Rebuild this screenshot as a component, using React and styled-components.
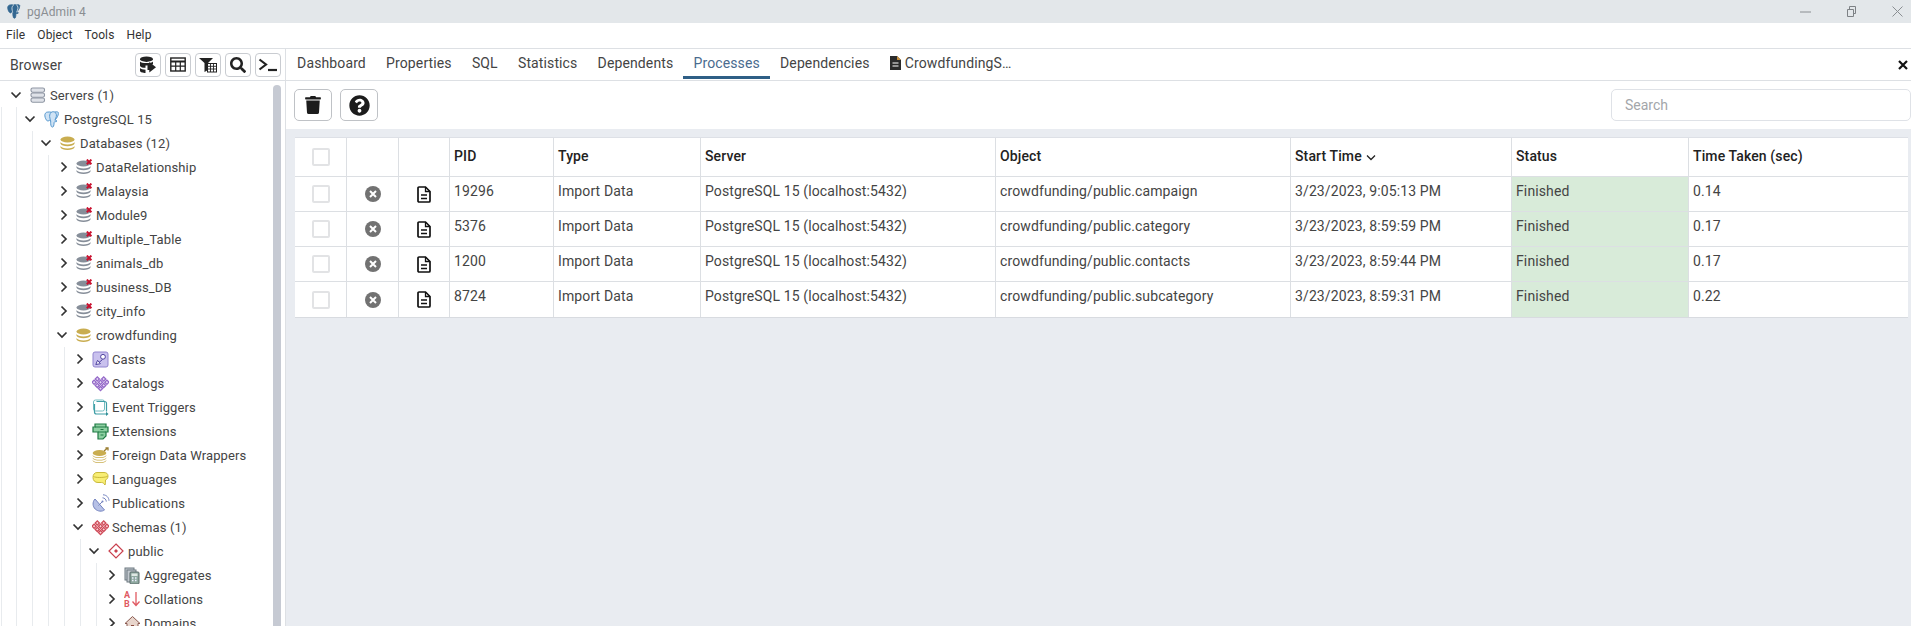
import React from 'react'
import styled, { createGlobalStyle } from 'styled-components'
import { FaSearch, FaTrash, FaQuestionCircle } from 'react-icons/fa'

const GlobalStyle = createGlobalStyle`
    html, body {
        margin: 0;
        height: 100%;
        overflow: hidden;
        background: #fff;
    }
    * {
        box-sizing: border-box;
    }
`
const Page = styled.div`
    width: 1911px;
    height: 626px;
    display: flex;
    flex-direction: column;
    overflow: hidden;
    font-family: Roboto, "Liberation Sans", sans-serif;
    font-size: 14px;
    letter-spacing: 0.12px;
    color: #333;
`
const TitleBar = styled.div`
    height: 23px;
    flex: none;
    display: flex;
    align-items: center;
    gap: 5px;
    padding: 0 8px 0 7px;
    background: #e3e7ea;
    color: #8a8e92;
    font-size: 12px;
`
const WindowControls = styled.div`
    margin-left: auto;
    display: flex;
    gap: 35px;
    svg {
        display: block;
    }
`
const MenuBar = styled.div`
    height: 26px;
    flex: none;
    display: flex;
    align-items: center;
    padding-bottom: 1px;
    border-bottom: 1px solid #dde0e4;
    font-size: 12px;
    color: #333;
`
const MenuItem = styled.span`
    padding: 0 6px;
`
const Main = styled.div`
    flex: 1;
    min-height: 0;
    display: flex;
`
const LeftPanel = styled.div`
    width: 286px;
    flex: none;
    display: flex;
    flex-direction: column;
    border-right: 1px solid #dde0e4;
`
const PanelHeader = styled.div`
    height: 32px;
    flex: none;
    display: flex;
    align-items: center;
    padding: 0 4px 0 10px;
    border-bottom: 1px solid #dde0e4;
`
const PanelTitle = styled.span`
    flex: 1;
    font-size: 14px;
    color: #444;
`
const PanelButtons = styled.div`
    display: flex;
    gap: 4px;
`
const PanelButton = styled.div`
    width: 26px;
    height: 24px;
    display: flex;
    align-items: center;
    justify-content: center;
    border: 1px solid #c9ccd1;
    border-radius: 4px;
    color: #222;
`
const TreeArea = styled.div`
    flex: 1;
    min-height: 0;
    display: flex;
    overflow: hidden;
`
const Tree = styled.div`
    flex: 1;
    padding: 2px 0 0 3px;
`
const ScrollThumb = styled.div`
    width: 8px;
    flex: none;
    margin: 4px 4px 0 0;
    border-radius: 4px 4px 0 0;
    background: #c6cad3;
`
const RootGuide = styled.div`
    margin-left: -2px;
    padding-left: 14px;
    border-left: 1px solid #e8ebee;
`
const Children = styled.div`
    border-left: 1px solid #e8ebee;
    margin-left: ${(p) => (p.$first ? '0' : '15px')};
`
const Row = styled.div`
    height: 24px;
    display: flex;
    align-items: center;
    white-space: nowrap;
    font-size: 13px;
    color: #444;
`
const Chevron = styled.span`
    width: 27px;
    flex: none;
    display: flex;
    justify-content: flex-end;
    padding-right: 8px;
`
const NodeIcon = styled.span`
    width: 20px;
    flex: none;
    display: flex;
    svg {
        display: block;
    }
`
const RightPanel = styled.div`
    flex: 1;
    min-width: 0;
    display: flex;
    flex-direction: column;
`
const Tabs = styled.div`
    height: 32px;
    flex: none;
    display: flex;
    align-items: stretch;
    padding-left: 1px;
    border-bottom: 1px solid #dde0e4;
`
const Tab = styled.div`
    display: flex;
    align-items: center;
    gap: 4px;
    padding: 0 10.1px;
    margin-bottom: 1px;
    border-bottom: 3px solid ${(p) => (p.$active ? '#2f5f86' : 'transparent')};
    color: ${(p) => (p.$active ? '#4a6b8e' : '#444')};
`
const CloseTab = styled.div`
    margin-left: auto;
    padding-right: 3px;
    display: flex;
    align-items: center;
`
const Toolbar = styled.div`
    height: 48px;
    flex: none;
    display: flex;
    align-items: center;
    gap: 8px;
    padding-left: 8px;
`
const ToolButton = styled.div`
    width: 38px;
    height: 32px;
    display: flex;
    align-items: center;
    justify-content: center;
    border: 1px solid #bfc2c6;
    border-radius: 5px;
    color: #1c1c1c;
`
const SearchBox = styled.input`
    margin-left: auto;
    width: 300px;
    height: 32px;
    padding: 0 13px;
    border: 1px solid #dfe2e7;
    border-radius: 5px;
    outline: none;
    font: 14px Roboto, sans-serif;
    &::placeholder {
        color: #a3a6aa;
    }
`
const Content = styled.div`
    flex: 1;
    min-height: 0;
    padding: 8px 3px 0 9px;
    background: #e9ecf1;
`
const Table = styled.div`
    width: 1613px;
    background: #fff;
    border-top: 1px solid #dde0e6;
    border-bottom: 1px solid #d8dbe0;
`
const TableRow = styled.div`
    height: ${(p) => (p.$head ? '39px' : '35px')};
    display: grid;
    grid-template-columns: 51px 52px 51px 104px 147px 295px 295px 221px 177px 220px;
    border-bottom: ${(p) => (p.$last ? 'none' : '1px solid #dcdfe3')};
`
const Cell = styled.div`
    display: flex;
    align-items: ${(p) => (p.$center ? 'center' : 'flex-start')};
    justify-content: ${(p) => (p.$center ? 'center' : 'flex-start')};
    gap: 4px;
    padding: ${(p) => (p.$center ? '0' : p.$head ? '10px 4px 0 4px' : '6px 4px 0 4px')};
    border-left: ${(p) => (p.$noBorder ? 'none' : '1px solid #dcdfe3')};
    font-weight: ${(p) => (p.$head ? 500 : 400)};
    color: ${(p) => (p.$head ? '#222' : '#444')};
    background: ${(p) => (p.$done ? '#d8ebd9' : 'transparent')};
    white-space: nowrap;
`
const CheckBox = styled.span`
    width: 18px;
    height: 18px;
    border: 2px solid #e2e3e5;
    border-radius: 2px;
`

const ChevronRight = () => (
  <svg width="8" height="12" viewBox="0 0 8 12"><path d="M1.500 1.500 6 6l-4.500 4.500" fill="none" stroke="#333" strokeWidth="1.700" /></svg>
)
const ChevronDown = () => (
  <svg width="12" height="8" viewBox="0 0 12 8"><path d="M1.500 1.500 6 6l4.500-4.500" fill="none" stroke="#333" strokeWidth="1.700" /></svg>
)

const Elephant = ({ size = 16, fill = '#336791', stroke = '#fff', line = '#336791' }) => (
  <svg width={size} height={size} viewBox="0 0 16 16">
    <path d="M3.500 1C1.500 1 .6 2.800.8 4.500c.2 2 1.200 4 2.300 4.800.7.500 1.400 0 1.900-.8.400.6.900.8 1.300.8-.1 1.500-.1 3.800.6 5.200.4.800 1.500.8 2 .1.500-.8.500-2.500.6-3.600.1-.8.600-1 1.100-.9.800.1 1.500-.2 1.600-.7-.7-.1-1.300-.5-1.400-1.300 1.200-1.500 2.800-3.800 2.700-5.800C14.300 1 11.800.4 10.200 1 8.900.5 7.700.6 6.800 1.200 5.800.8 4.600.9 3.500 1z" fill={fill} stroke={line} strokeWidth="0.900" />
    <path d="M6.800 1.300C5.200 2.500 5 4.800 5.600 6.800c.3 1 .4 1.600.4 2.500M10.200 1.100c1.700 1 1.900 3.400.9 5.600-.4.800-.7 1.400-.7 2.300" fill="none" stroke={stroke} strokeWidth="0.900" />
  </svg>
)

const DbIcon = ({ color = '#868e99', cross }) => (
  <svg width="17" height="16" viewBox="0 0 17 16">
    <ellipse cx="7.500" cy="4.500" rx="7" ry="3" fill={color} />
    <path d="M.5 7c.6 1.600 3.500 2.500 7 2.500s6.400-.9 7-2.500v1.800c-.6 1.500-3.500 2.400-7 2.400S1.100 10.300.5 8.800z" fill={color} />
    <path d="M.5 11c.6 1.600 3.500 2.500 7 2.500s6.400-.9 7-2.500v1.500c-.6 1.500-3.500 2.500-7 2.500S1.100 14 .5 12.500z" fill={color} />
    {cross && <path d="M10.800.6l4.600 4.600m0-4.600L10.800 5.200" stroke="#c8102e" strokeWidth="2" />}
  </svg>
)

const ServersIcon = () => (
  <svg width="16" height="16" viewBox="0 0 16 16">
    {[1, 6, 11].map((y) => (
      <rect key={y} x="1" y={y} width="13.500" height="4.200" rx="1.600" fill="#dfe2e8" stroke="#8f96a3" strokeWidth="1.100" />
    ))}
  </svg>
)

const CastsIcon = () => (
  <svg width="17" height="17" viewBox="0 0 17 17">
    <rect x="1" y="1" width="15" height="15" rx="2" fill="#c9c1ee" stroke="#9184cf" />
    <circle cx="11" cy="5.800" r="2.400" fill="#fff" stroke="#4e429f" />
    <path d="M3.800 13.500l1.800-4.200 2.800 3.400z" fill="#fff" stroke="#4e429f" />
    <path d="M10.500 8.500l-3.500 3" stroke="#4e429f" />
  </svg>
)

const heartCells = [[5.300, 4], [11.700, 4], [8.500, 7.200], [2.100, 7.200], [14.900, 7.200], [5.300, 10.400], [11.700, 10.400], [8.500, 13.600]]

const Diamonds = ({ color, light }) => (
  <svg width="17" height="17" viewBox="0 0 17 17">
    {heartCells.map(([x, y]) => (
      <path key={`${x}-${y}`} d={`M${x} ${y - 3}l3 3-3 3-3-3z`} fill={color} />
    ))}
    {heartCells.map(([x, y]) => (
      <path key={`c${x}-${y}`} d={`M${x} ${y - 1.200}l1.200 1.200-1.200 1.200-1.200-1.200z`} fill={light} />
    ))}
  </svg>
)

const TriggerIcon = () => (
  <svg width="17" height="17" viewBox="0 0 17 17">
    <rect x="1.500" y="1" width="11" height="11" rx="2" fill="#fff" stroke="#73bcc1" />
    <path d="M4.500 2.500h8a2 2 0 0 1 2 2v8M2.500 5v8a2 2 0 0 0 2 2h10" fill="none" stroke="#3f9ea6" strokeWidth="1.200" />
    <path d="M14 12.800l2.500 2.200-2.500 2z" fill="#2f8e96" />
  </svg>
)

const ExtensionIcon = () => (
  <svg width="17" height="17" viewBox="0 0 17 17">
    <path d="M3 1h11v3h2v5h-2v4l-3 3H6V9H1V4h2z" fill="#8ed0a2" stroke="#1f7a44" strokeWidth="1.200" />
    <path d="M3 4h11M6 9h8M8.500 6.500h3M8.500 12h3" stroke="#1f7a44" />
  </svg>
)

const FdwIcon = () => (
  <svg width="17" height="17" viewBox="0 0 17 17">
    <ellipse cx="7.500" cy="6" rx="6.800" ry="3" fill="#c9ad50" />
    <path d="M.7 8c.6 1.400 3.300 2.300 6.800 2.300s6.200-.9 6.800-2.300v.8c-.6 1.400-3.300 2.300-6.800 2.300S1.300 10.200.7 8.800zM.7 10.500c.6 1.400 3.300 2.300 6.800 2.300s6.200-.9 6.800-2.300v.8c-.6 1.400-3.300 2.300-6.800 2.300s-6.200-.9-6.800-2.300zM.7 13c.6 1.400 3.300 2.300 6.800 2.300s6.200-.9 6.800-2.300v.8c-.6 1.400-3.300 2.300-6.800 2.300S1.300 15.200.7 13.800z" fill="#c9ad50" />
    <path d="M12 4l3-2.500M13.500 1H16v2.500" fill="none" stroke="#9a7d30" strokeWidth="1.300" />
  </svg>
)

const LanguageIcon = () => (
  <svg width="17" height="17" viewBox="0 0 17 17">
    <path d="M5 1.500h7c2.500 0 4 1.300 4 3.500s-1.200 3.500-2.500 4c0 2 0 3.500-.5 5-1-1.500-2-2.500-3.500-2.500H6C3 11.500 1 9.500 1 6.500S2.500 1.500 5 1.500z" fill="#f8ee74" stroke="#c9b93a" />
    <path d="M1.500 5.500c2 1.300 10 1.300 14 0" fill="none" stroke="#c9b93a" />
  </svg>
)

const PublicationIcon = () => (
  <svg width="18" height="18" viewBox="0 0 18 18">
    <path d="M3 5c-2.800 3-2.400 7.500.2 10s6.800 2.800 9.300 1z" fill="#b7c1e6" stroke="#7483bf" />
    <circle cx="10.500" cy="7.500" r="1" fill="#7483bf" />
    <path d="M6.500 11.500l4-4" stroke="#7483bf" />
    <path d="M10.500 3.800c2 0 3.800 1.800 3.800 3.800M11 .8c3.400 0 6 2.800 6 6" fill="none" stroke="#7483bf" />
  </svg>
)

const SchemaNodeIcon = () => (
  <svg width="16" height="16" viewBox="0 0 16 16">
    <path d="M8 1l7 7-7 7-7-7z" fill="#fff" stroke="#c9404e" strokeWidth="1.200" />
    <path d="M8 6l2 2-2 2-2-2z" fill="#c9404e" />
  </svg>
)

const AggregateIcon = () => (
  <svg width="17" height="17" viewBox="0 0 17 17">
    <rect x="1" y="1" width="9" height="12" fill="#c3c9cf" stroke="#6d7880" />
    <rect x="3" y="3" width="9" height="12" fill="#c3c9cf" stroke="#6d7880" />
    <rect x="6" y="5" width="9" height="12" rx="1" fill="#8fa9a0" stroke="#5a6a6a" />
    <rect x="7.500" y="6.500" width="6" height="2.500" fill="#dfe8e4" />
    <path d="M8 11h1.500M11 11h1.500M8 13.500h1.500M11 13.500h1.500" stroke="#eef" strokeWidth="1.300" />
  </svg>
)

const CollationLetter = styled.text`
    font-family: Roboto, sans-serif;
    font-size: 9px;
    font-weight: 700;
    letter-spacing: 0;
    fill: #e05a62;
`
const CollationIcon = () => (
  <svg width="17" height="18" viewBox="0 0 17 18">
    <CollationLetter x="0" y="8">A</CollationLetter>
    <CollationLetter x="0" y="17">B</CollationLetter>
    <path d="M12 2v13M8.500 11.500 12 15.500l3.500-4" fill="none" stroke="#e05a62" strokeWidth="1.300" />
  </svg>
)

const DomainIcon = () => (
  <svg width="17" height="17" viewBox="0 0 17 17">
    <path d="M8.500 1.500 16 8.500h-2V16H3V8.500H1z" fill="#e8d5cc" stroke="#8a5a50" />
    <rect x="7" y="10" width="3" height="6" fill="#8a4a3c" />
  </svg>
)

const QueryIcon = () => (
  <svg width="18" height="18" viewBox="0 0 18 18">
    <ellipse cx="7.500" cy="3.200" rx="6.500" ry="2.700" fill="#222" />
    <path d="M1 5.500c1 2 12 2 13 0v2.700c-2.500 1-5 1.400-7.500 1.300v2.300c-2.500 0-5-.5-5.500-1.800zM1 12c1 1 3 1.600 5.500 1.700V17C4 17 1 16 1 15z" fill="#222" />
    <path d="M8.500 8.500h1.800V6l6.700 5.200-6.700 5.300v-2.500H8.500z" fill="#222" />
  </svg>
)
const GridIcon = () => (
  <svg width="16" height="15" viewBox="0 0 16 15">
    <rect x="0.800" y="1" width="14.400" height="13" fill="none" stroke="#222" strokeWidth="1.400" />
    <path d="M1 4.500h14" stroke="#222" strokeWidth="2" />
    <path d="M1 9.200h14M5.700 4v10M10.300 4v10" stroke="#222" strokeWidth="1.200" />
  </svg>
)
const FilterGridIcon = () => (
  <svg width="18" height="16" viewBox="0 0 18 16">
    <path d="M0 1h14L9 6v7L5.500 15V6z" fill="#222" />
    <rect x="8.500" y="6.500" width="9" height="8.500" fill="#fff" stroke="#222" />
    <path d="M8.500 9.300h9M8.500 12h9M11.500 7v8M14.500 7v8" stroke="#222" strokeWidth="0.900" />
  </svg>
)
const TerminalIcon = () => (
  <svg width="20" height="14" viewBox="0 0 20 14">
    <path d="M1.500 1.500 8 6.500l-6.500 5" fill="none" stroke="#222" strokeWidth="2.200" />
    <path d="M10 12h9" stroke="#222" strokeWidth="2.200" />
  </svg>
)
const CancelIcon = () => (
  <svg width="16" height="16" viewBox="0 0 16 16">
    <circle cx="8" cy="8" r="8" fill="#727272" />
    <path d="M5 5l6 6m0-6-6 6" stroke="#fff" strokeWidth="2" />
  </svg>
)
const DocIcon = () => (
  <svg width="14" height="17" viewBox="0 0 14 17">
    <path d="M1 2a1 1 0 0 1 1-1h6.500L13 5.500V15a1 1 0 0 1-1 1H2a1 1 0 0 1-1-1z" fill="#fff" stroke="#111" strokeWidth="1.700" />
    <path d="M8.500 1v4.500H13" fill="none" stroke="#111" strokeWidth="1.300" />
    <path d="M4 9h6M4 12.500h6" stroke="#111" strokeWidth="1.400" />
  </svg>
)
const FileTabIcon = () => (
  <svg width="11" height="14" viewBox="0 0 11 14">
    <path d="M0 0h7l4 4v10H0z" fill="#2b2b2b" />
    <path d="M7 0v4h4" fill="#c8903c" />
    <path d="M2.500 7h6M2.500 10h6" stroke="#fff" strokeWidth="1.200" />
  </svg>
)

const Node = ({ icon, label, open, leaf, children, first }) => (
  <>
    <Row>
      <Chevron>{open ? <ChevronDown /> : !leaf && <ChevronRight />}</Chevron>
      <NodeIcon>{icon}</NodeIcon>
      {label}
    </Row>
    {children && <Children $first={first}>{children}</Children>}
  </>
)

const closedDatabases = ['DataRelationship', 'Malaysia', 'Module9', 'Multiple_Table', 'animals_db', 'business_DB', 'city_info']

const tableHead = ['PID', 'Type', 'Server', 'Object', 'Start Time', 'Status', 'Time Taken (sec)']

const processes = [
  { pid: '19296', object: 'crowdfunding/public.campaign', start: '3/23/2023, 9:05:13 PM', time: '0.14' },
  { pid: '5376', object: 'crowdfunding/public.category', start: '3/23/2023, 8:59:59 PM', time: '0.17' },
  { pid: '1200', object: 'crowdfunding/public.contacts', start: '3/23/2023, 8:59:44 PM', time: '0.17' },
  { pid: '8724', object: 'crowdfunding/public.subcategory', start: '3/23/2023, 8:59:31 PM', time: '0.22' },
]

const tabNames = ['Dashboard', 'Properties', 'SQL', 'Statistics', 'Dependents', 'Processes', 'Dependencies']

export default function App() {
  return (
    <Page>
      <GlobalStyle />
      <TitleBar>
        <Elephant size={15} fill="#336791" stroke="#dfe6ec" />
        pgAdmin 4
        <WindowControls>
          <svg width="11" height="11" viewBox="0 0 11 11"><path d="M0 6h11" stroke="#8a8e92" /></svg>
          <svg width="11" height="11" viewBox="0 0 11 11"><path d="M1.500 3.500h6v7h-6zM3.500 3.500v-3h6v7h-2" fill="none" stroke="#7d8185" /></svg>
          <svg width="11" height="11" viewBox="0 0 11 11"><path d="M.5.500l10 10m0-10-10 10" stroke="#8a8e92" /></svg>
        </WindowControls>
      </TitleBar>
      <MenuBar>
        <MenuItem>File</MenuItem>
        <MenuItem>Object</MenuItem>
        <MenuItem>Tools</MenuItem>
        <MenuItem>Help</MenuItem>
      </MenuBar>
      <Main>
        <LeftPanel>
          <PanelHeader>
            <PanelTitle>Browser</PanelTitle>
            <PanelButtons>
              <PanelButton><QueryIcon /></PanelButton>
              <PanelButton><GridIcon /></PanelButton>
              <PanelButton><FilterGridIcon /></PanelButton>
              <PanelButton><FaSearch size={16} /></PanelButton>
              <PanelButton><TerminalIcon /></PanelButton>
            </PanelButtons>
          </PanelHeader>
          <TreeArea>
            <Tree>
              <Node icon={<ServersIcon />} label="Servers (1)" open />
              <RootGuide>
                <Children $first>
                  <Node icon={<Elephant size={17} fill="#cfe3f5" stroke="#4f93cc" line="#4f93cc" />} label="PostgreSQL 15" open>
                    <Node icon={<DbIcon color="#c9ad50" />} label="Databases (12)" open>
                      {closedDatabases.map((name) => (
                        <Node key={name} icon={<DbIcon cross />} label={name} />
                      ))}
                      <Node icon={<DbIcon color="#c9ad50" />} label="crowdfunding" open>
                        <Node icon={<CastsIcon />} label="Casts" />
                        <Node icon={<Diamonds color="#9468c8" light="#e6daf5" />} label="Catalogs" />
                        <Node icon={<TriggerIcon />} label="Event Triggers" />
                        <Node icon={<ExtensionIcon />} label="Extensions" />
                        <Node icon={<FdwIcon />} label="Foreign Data Wrappers" />
                        <Node icon={<LanguageIcon />} label="Languages" />
                        <Node icon={<PublicationIcon />} label="Publications" />
                        <Node icon={<Diamonds color="#cf4a58" light="#f8d5d8" />} label="Schemas (1)" open>
                          <Node icon={<SchemaNodeIcon />} label="public" open>
                            <Node icon={<AggregateIcon />} label="Aggregates" />
                            <Node icon={<CollationIcon />} label="Collations" />
                            <Node icon={<DomainIcon />} label="Domains" />
                          </Node>
                        </Node>
                      </Node>
                    </Node>
                  </Node>
                </Children>
              </RootGuide>
            </Tree>
            <ScrollThumb />
          </TreeArea>
        </LeftPanel>
        <RightPanel>
          <Tabs>
            {tabNames.map((name) => (
              <Tab key={name} $active={name === 'Processes'}>{name}</Tab>
            ))}
            <Tab><FileTabIcon />CrowdfundingS…</Tab>
            <CloseTab>
              <svg width="10" height="10" viewBox="0 0 10 10"><path d="M1 1l8 8m0-8-8 8" stroke="#111" strokeWidth="2.200" /></svg>
            </CloseTab>
          </Tabs>
          <Toolbar>
            <ToolButton><FaTrash size={18} /></ToolButton>
            <ToolButton><FaQuestionCircle size={21} /></ToolButton>
            <SearchBox placeholder="Search" />
          </Toolbar>
          <Content>
            <Table>
              <TableRow $head>
                <Cell $center $noBorder><CheckBox /></Cell>
                <Cell $center />
                <Cell $center />
                {tableHead.map((name) => (
                  <Cell key={name} $head>
                    {name}
                    {name === 'Start Time' && (
                      <svg width="10" height="18" viewBox="0 0 10 18"><path d="M1 7.500l4 4 4-4" fill="none" stroke="#222" strokeWidth="1.300" /></svg>
                    )}
                  </Cell>
                ))}
              </TableRow>
              {processes.map((p, i) => (
                <TableRow key={p.pid} $last={i === processes.length - 1}>
                  <Cell $center $noBorder><CheckBox /></Cell>
                  <Cell $center><CancelIcon /></Cell>
                  <Cell $center><DocIcon /></Cell>
                  <Cell>{p.pid}</Cell>
                  <Cell>Import Data</Cell>
                  <Cell>PostgreSQL 15 (localhost:5432)</Cell>
                  <Cell>{p.object}</Cell>
                  <Cell>{p.start}</Cell>
                  <Cell $done>Finished</Cell>
                  <Cell>{p.time}</Cell>
                </TableRow>
              ))}
            </Table>
          </Content>
        </RightPanel>
      </Main>
    </Page>
  )
}
